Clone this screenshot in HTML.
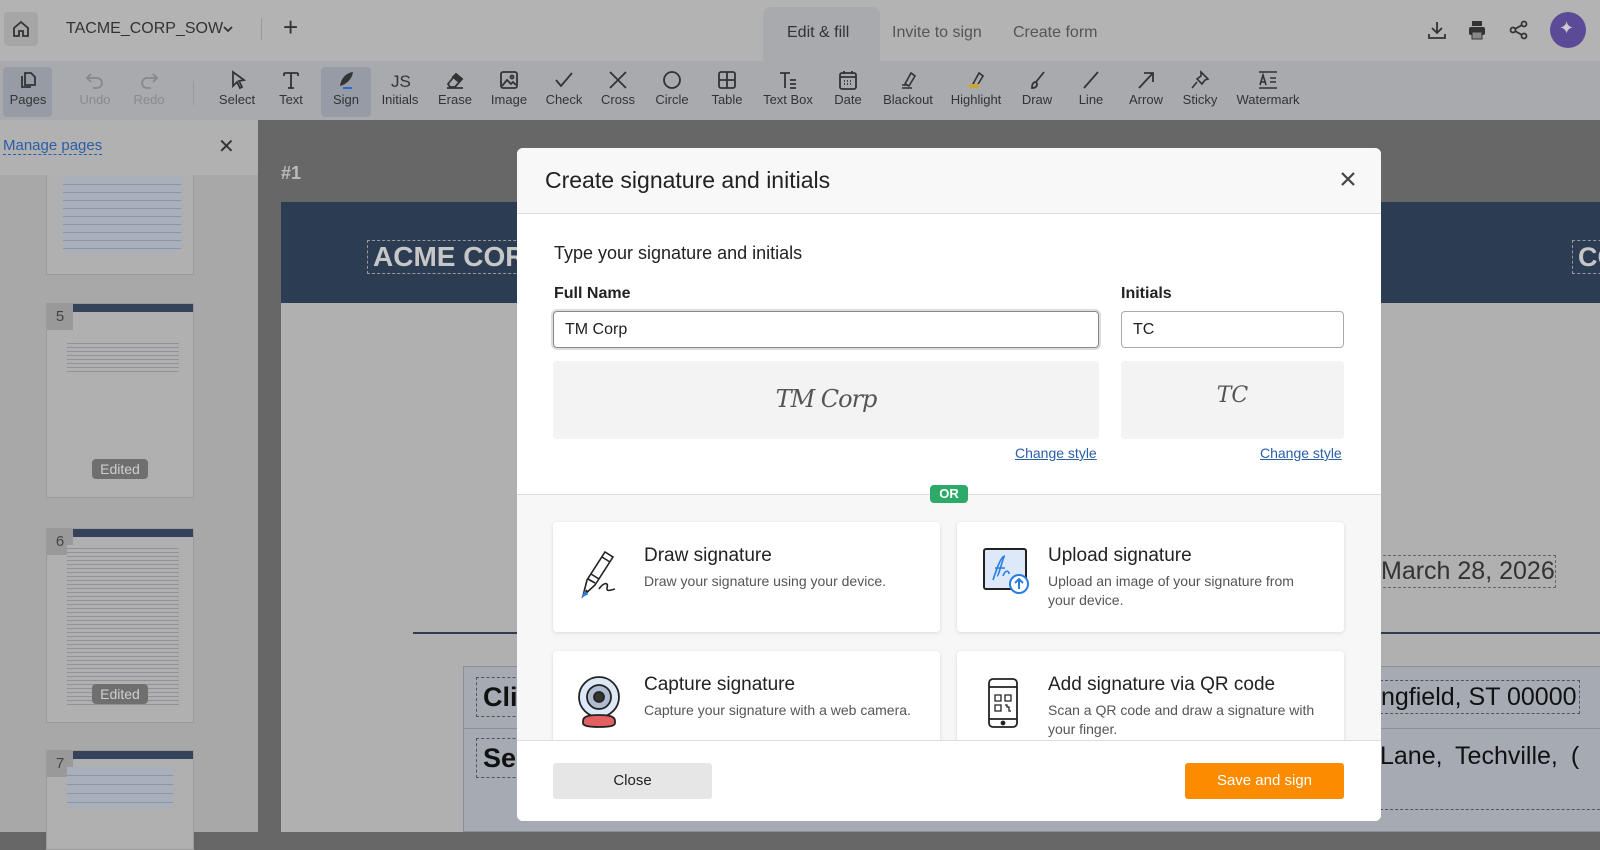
<!DOCTYPE html>
<html><head><meta charset="utf-8">
<style>
*{box-sizing:border-box;margin:0;padding:0}
body{width:1600px;height:832px;overflow:hidden;position:relative;font-family:"Liberation Sans",sans-serif;background:#676767}
.abs{position:absolute}
#top{left:0;top:0;width:1600px;height:61px;background:#b3b3b3}
#tb{left:0;top:61px;width:1600px;height:59px;background:#a9aaae}
.ti{position:absolute;top:64px;height:52px;text-align:center;font-size:13px;color:#333;width:56px;margin-left:-28px}
.ti svg{display:block;margin:6px auto 2px;width:22px;height:20px}
.ti.dis{color:#8a8a8a}
#left{left:0;top:120px;width:258px;height:712px;background:#a8a8a8}
.thumb{position:absolute;left:46px;width:148px;background:#b0b0b0;border:1px solid #9a9a9a}
.num{position:absolute;left:0;top:0;width:26px;height:26px;background:#999;color:#444;font-size:15px;text-align:center;line-height:26px}
.edited{position:absolute;left:45px;width:56px;height:20px;background:#6f6f6f;color:#cfcfcf;border-radius:4px;font-size:14px;text-align:center;line-height:20px}
.lines{position:absolute;left:20px;right:14px;background:repeating-linear-gradient(#b0b0b0 0 3px,#8f9298 3px 4px)}
#modal{left:517px;top:148px;width:864px;height:673px;background:#fff;border-radius:6px;overflow:hidden}
.card{position:absolute;width:387px;height:110px;background:#fff;border-radius:4px;box-shadow:0 1px 4px rgba(0,0,0,.12)}
.card h3{position:absolute;left:91px;top:23px;font-size:19px;font-weight:normal;color:#222}
.card p{position:absolute;left:91px;top:50px;font-size:14px;color:#555;line-height:19px;width:275px}
.card svg{position:absolute;left:24px;top:24px}
.nw{white-space:nowrap}
</style></head><body>
<div id="top" class="abs">
  <div class="abs" style="left:4px;top:12px;width:34px;height:34px;background:#a6a6a6;border-radius:4px"></div>
  <svg class="abs" style="left:11px;top:19px" width="20" height="20" viewBox="0 0 20 20" fill="none" stroke="#333" stroke-width="1.8"><path d="M3 9L10 3l7 6v8H12v-5H8v5H3z"/></svg>
  <div class="abs" style="left:66px;top:20px;font-size:16px;color:#333">TACME_CORP_SOW</div>
  <svg class="abs" style="left:222px;top:25px" width="12" height="8" viewBox="0 0 12 8"><path d="M2 2l4 4 4-4" stroke="#333" stroke-width="1.8" fill="none"/></svg>
  <div class="abs" style="left:261px;top:18px;width:1px;height:22px;background:#999"></div>
  <div class="abs" style="left:283px;top:12px;font-size:26px;color:#333;font-weight:300">+</div>
  <div class="abs" style="left:763px;top:7px;width:117px;height:54px;background:#a9aaae;border-radius:8px 8px 0 0"></div>
  <div class="abs" style="left:787px;top:24px;font-size:16px;color:#333">Edit &amp; fill</div>
  <div class="abs" style="left:892px;top:24px;font-size:16px;color:#555">Invite to sign</div>
  <div class="abs" style="left:1013px;top:24px;font-size:16px;color:#555">Create form</div>
  <svg class="abs" style="left:1426px;top:19px" width="22" height="22" viewBox="0 0 22 22" fill="none" stroke="#333" stroke-width="1.8"><path d="M11 3v11M6 9l5 5 5-5M3 15v4h16v-4"/></svg>
  <svg class="abs" style="left:1466px;top:19px" width="22" height="22" viewBox="0 0 22 22" fill="#333"><rect x="6" y="2" width="10" height="5"/><rect x="3" y="8" width="16" height="8" rx="2"/><rect x="6" y="13" width="10" height="7" fill="#888" stroke="#333"/></svg>
  <svg class="abs" style="left:1508px;top:19px" width="22" height="22" viewBox="0 0 22 22" fill="none" stroke="#333" stroke-width="1.8"><circle cx="16" cy="5" r="2.5"/><circle cx="5" cy="11" r="2.5"/><circle cx="16" cy="17" r="2.5"/><path d="M7 10l7-4M7 12l7 4"/></svg>
  <div class="abs" style="left:1550px;top:12px;width:36px;height:36px;border-radius:50%;background:#5a4a98"></div>
  <div class="abs" style="left:1559px;top:18px;color:#ccc;font-size:18px">✦</div>
</div>
<div id="tb" class="abs">
  <div class="abs" style="left:3px;top:6px;width:49px;height:50px;background:#979ba5;border-radius:4px"></div>
  <div class="abs" style="left:321px;top:6px;width:50px;height:50px;background:#979ba5;border-radius:4px"></div>
  <div class="abs" style="left:193px;top:20px;width:1px;height:24px;background:#999"></div>
</div>
<div class="ti" style="left:28px"><svg viewBox="0 0 22 20" fill="none" stroke="#333" stroke-width="1.8"><path d="M8 3h6l4 4v8H8z M5 6v11h9"/></svg>Pages</div>
<div class="ti dis" style="left:95px"><svg viewBox="0 0 22 20" fill="none" stroke="#888" stroke-width="1.8"><path d="M7 4L3 8l4 4M3 8h10a5 5 0 010 10H9"/></svg>Undo</div>
<div class="ti dis" style="left:149px"><svg viewBox="0 0 22 20" fill="none" stroke="#888" stroke-width="1.8"><path d="M15 4l4 4-4 4M19 8H9a5 5 0 000 10h4"/></svg>Redo</div>
<div class="ti" style="left:237px"><svg viewBox="0 0 22 20" fill="none" stroke="#333" stroke-width="1.8"><path d="M7 2l11 8-5 1 3 6-2 1-3-6-4 4z"/></svg>Select</div>
<div class="ti" style="left:291px"><svg viewBox="0 0 22 20" fill="none" stroke="#333" stroke-width="1.8"><path d="M4 3h14M11 3v15M8 18h6M4 3v3M18 3v3"/></svg>Text</div>
<div class="ti" style="left:346px"><svg viewBox="0 0 22 20" fill="#333"><path d="M5 16C6 8 11 3 18 2c-1 7-6 12-13 14z"/><rect x="8" y="17" width="9" height="2" fill="#2a6bd0"/></svg>Sign</div>
<div class="ti" style="left:400px"><svg viewBox="0 0 22 20"><text x="2" y="17" font-family="Liberation Sans" font-size="17" fill="#333">JS</text></svg>Initials</div>
<div class="ti" style="left:455px"><svg viewBox="0 0 22 20" fill="none" stroke="#333" stroke-width="1.8"><path d="M4 14l8-10 6 5-7 8H6z M3 18h16"/><path d="M12 4l6 5-3 3-6-5z" fill="#333"/></svg>Erase</div>
<div class="ti" style="left:509px"><svg viewBox="0 0 22 20" fill="none" stroke="#333" stroke-width="1.8"><rect x="3" y="2" width="16" height="16" rx="2"/><path d="M4 16l5-6 4 4 2-2 3 3"/><circle cx="14" cy="7" r="1.5"/></svg>Image</div>
<div class="ti" style="left:564px"><svg viewBox="0 0 22 20" fill="none" stroke="#333" stroke-width="1.8"><path d="M3 10l5 6L19 3"/></svg>Check</div>
<div class="ti" style="left:618px"><svg viewBox="0 0 22 20" fill="none" stroke="#333" stroke-width="1.8"><path d="M3 2l16 16M19 2L3 18"/></svg>Cross</div>
<div class="ti" style="left:672px"><svg viewBox="0 0 22 20" fill="none" stroke="#333" stroke-width="1.8"><circle cx="11" cy="10" r="8"/></svg>Circle</div>
<div class="ti" style="left:727px"><svg viewBox="0 0 22 20" fill="none" stroke="#333" stroke-width="1.8"><rect x="3" y="2" width="16" height="16" rx="2"/><path d="M11 2v16M3 10h16"/></svg>Table</div>
<div class="ti" style="left:788px;width:64px;margin-left:-32px"><svg viewBox="0 0 22 20" fill="none" stroke="#333" stroke-width="1.8"><path d="M3 3h10M8 3v15M13 10h6M13 14h6M13 18h6"/></svg>Text Box</div>
<div class="ti" style="left:848px"><svg viewBox="0 0 22 20" fill="none" stroke="#333" stroke-width="1.8"><rect x="3" y="3" width="16" height="16" rx="2"/><path d="M3 7h16M7 1v3M15 1v3M7 11h1M10 11h1M13 11h1M7 14h1M10 14h1M13 14h1"/></svg>Date</div>
<div class="ti" style="left:908px;width:64px;margin-left:-32px"><svg viewBox="0 0 22 20" fill="none" stroke="#333" stroke-width="1.6"><path d="M8 14l6-11 4 3-6 10zM5 18h10M5 15h6"/></svg>Blackout</div>
<div class="ti" style="left:976px;width:64px;margin-left:-32px"><svg viewBox="0 0 22 20" fill="none" stroke="#333" stroke-width="1.6"><path d="M8 14l6-11 4 3-6 10z"/><rect x="4" y="14" width="10" height="4" fill="#c9a63a" stroke="none"/></svg>Highlight</div>
<div class="ti" style="left:1037px"><svg viewBox="0 0 22 20" fill="none" stroke="#333" stroke-width="1.8"><path d="M18 2l-8 10M10 12c-3 0-4 2-4 6 3 0 5-1 5-4z"/></svg>Draw</div>
<div class="ti" style="left:1091px"><svg viewBox="0 0 22 20" fill="none" stroke="#333" stroke-width="1.8"><path d="M4 18L18 2"/></svg>Line</div>
<div class="ti" style="left:1146px"><svg viewBox="0 0 22 20" fill="none" stroke="#333" stroke-width="1.8"><path d="M4 18L18 3M9 3h9v9"/></svg>Arrow</div>
<div class="ti" style="left:1200px"><svg viewBox="0 0 22 20" fill="none" stroke="#333" stroke-width="1.6"><path d="M12 2l7 7-3 1-3 4-5-5 4-3zM8 12l-5 6"/></svg>Sticky</div>
<div class="ti" style="left:1268px;width:80px;margin-left:-40px"><svg viewBox="0 0 22 20" fill="none" stroke="#333" stroke-width="1.6"><path d="M2 2h18M2 18h18M13 8h6M13 12h6M3 15l3-10 3 10M4 12h4"/></svg>Watermark</div>

<div id="left" class="abs">
  <div class="abs" style="left:0;top:0;width:258px;height:55px;background:#b1b1b1"></div>
  <div class="abs" style="left:3px;top:17px;font-size:15px;color:#2a5da8;border-bottom:1px dashed #2a5da8">Manage pages</div>
  <div class="abs" style="left:218px;top:14px;font-size:20px;color:#333">✕</div>
  <div class="thumb" style="top:55px;height:100px;border-top:none"><div class="lines" style="top:2px;height:75px;left:16px;right:12px;background:repeating-linear-gradient(#a9b0bd 0 7px,#8f96a3 7px 8px)"></div></div>
  <div class="thumb" style="top:183px;height:195px"><div style="height:8px;background:#34435a;margin-left:26px"></div><div class="num">5</div><div class="lines" style="top:36px;height:34px"></div><div class="edited" style="top:155px">Edited</div></div>
  <div class="thumb" style="top:408px;height:195px"><div style="height:8px;background:#34435a;margin-left:26px"></div><div class="num">6</div><div class="lines" style="top:16px;height:160px"></div><div class="edited" style="top:155px">Edited</div></div>
  <div class="thumb" style="top:630px;height:100px"><div style="height:8px;background:#34435a;margin-left:26px"></div><div class="num">7</div><div class="lines" style="top:16px;height:40px;left:20px;right:20px;background:repeating-linear-gradient(#a9b0bd 0 8px,#8f96a3 8px 9px)"></div></div>
</div>

<div class="abs" style="left:281px;top:163px;font-size:18px;color:#bbb;font-weight:bold">#1</div>
<div class="abs" style="left:281px;top:202px;width:1319px;height:630px;background:#b0b0b0"></div>
<div class="abs" style="left:281px;top:202px;width:1319px;height:101px;background:#2b3c53"></div>
<div class="abs nw" style="left:367px;top:240px;width:240px;height:34px;border:1px dashed #999;color:#c7c7c7;font-size:28px;font-weight:bold;padding-left:5px;line-height:32px;overflow:hidden">ACME CORP</div>
<div class="abs nw" style="left:1572px;top:240px;width:40px;height:34px;border:1px dashed #999;color:#c7c7c7;font-size:27px;font-weight:bold;padding-left:5px;line-height:32px">CO</div>
<div class="abs nw" style="left:1378px;top:555px;width:178px;height:33px;border:1px dashed #666;color:#333;font-size:25px;padding-left:2px;line-height:31px">March 28, 2026</div>
<div class="abs" style="left:413px;top:632px;width:1190px;height:2px;background:#2b3c53"></div>
<div class="abs" style="left:463px;top:666px;width:1140px;height:166px;background:#a5aab3;border:1px solid #8a8f98"></div>
<div class="abs" style="left:463px;top:728px;width:1140px;height:1px;background:#8a8f98"></div>
<div class="abs nw" style="left:476px;top:677px;width:50px;height:40px;border:1px dashed #555;font-size:27px;font-weight:bold;color:#111;line-height:38px;padding-left:6px;overflow:hidden">Cli</div>
<div class="abs nw" style="left:476px;top:738px;width:50px;height:40px;border:1px dashed #555;font-size:27px;font-weight:bold;color:#111;line-height:38px;padding-left:6px;overflow:hidden">Ser</div>
<div class="abs nw" style="left:1380px;top:680px;width:200px;height:34px;border:1px dashed #555;font-size:25px;color:#111;line-height:32px">ngfield, ST 00000</div>
<div class="abs nw" style="left:1380px;top:740px;width:230px;height:70px;border-bottom:1px dashed #555;font-size:25px;color:#111;line-height:32px;word-spacing:6px">Lane, Techville, (</div>

<div id="modal" class="abs">
  <div class="abs" style="left:0;top:0;width:864px;height:66px;background:#f8f8f8;border-bottom:1px solid #ddd"></div>
  <div class="abs" style="left:28px;top:19px;font-size:23px;color:#222">Create signature and initials</div>
  <svg class="abs" style="left:823px;top:23px" width="16" height="16" viewBox="0 0 16 16"><path d="M2 2l12 12M14 2L2 14" stroke="#444" stroke-width="2.2"/></svg>
  <div class="abs" style="left:37px;top:95px;font-size:18px;color:#222">Type your signature and initials</div>
  <div class="abs" style="left:37px;top:137px;font-size:16px;font-weight:bold;color:#222">Full Name</div>
  <div class="abs" style="left:604px;top:137px;font-size:16px;font-weight:bold;color:#222">Initials</div>
  <div class="abs" style="left:36px;top:163px;width:546px;height:37px;border:1px solid #888;border-radius:4px;box-shadow:0 0 0 2px #ddd;font-size:16px;color:#222;padding:9px 11px">TM Corp</div>
  <div class="abs" style="left:604px;top:163px;width:223px;height:37px;border:1px solid #aaa;border-radius:4px;font-size:16px;color:#222;padding:9px 11px">TC</div>
  <div class="abs" style="left:36px;top:213px;width:546px;height:78px;background:#f3f3f3;border-radius:4px;text-align:center;font-family:'DejaVu Serif',serif;font-style:italic;font-size:24px;color:#555;line-height:76px;letter-spacing:-1px;font-weight:100">TM Corp</div>
  <div class="abs" style="left:604px;top:213px;width:223px;height:78px;background:#f3f3f3;border-radius:4px;text-align:center;font-family:'DejaVu Serif',serif;font-style:italic;font-size:22px;color:#555;line-height:70px">TC</div>
  <div class="abs" style="left:498px;top:297px;font-size:14px;color:#2a5da8;text-decoration:underline">Change style</div>
  <div class="abs" style="left:743px;top:297px;font-size:14px;color:#2a5da8;text-decoration:underline">Change style</div>
  <div class="abs" style="left:0;top:346px;width:864px;height:246px;background:#f7f7f7;border-top:1px solid #ddd"></div>
  <div class="abs" style="left:413px;top:337px;width:38px;height:18px;background:#2eaa68;border-radius:4px;color:#fff;font-size:13px;font-weight:bold;text-align:center;line-height:18px">OR</div>
  <div class="card" style="left:36px;top:374px"><svg width="46" height="56" viewBox="0 0 46 56" fill="none" stroke="#222" stroke-width="1.6"><path d="M6 50L10 34 28 6l8 5-18 28z"/><path d="M25 11l8 5M14 28l8 5M11 33l7 4M6 50l4-6"/><path d="M22 43c4-6 10-8 8-1-1 4 4 2 8 1" /><path d="M6 50l2-4 2 2z" fill="#2a7de0" stroke="#2a7de0"/></svg><h3>Draw signature</h3><p>Draw your signature using your device.</p></div>
  <div class="card" style="left:440px;top:374px"><svg width="50" height="50" viewBox="0 0 50 50" fill="none"><rect x="3" y="3" width="42" height="40" rx="2" fill="#dde9f8" stroke="#222" stroke-width="2"/><path d="M12 34c4-12 8-24 12-24-2 0-6 20-8 20M14 22h10M22 30c2-6 6-6 6-2" stroke="#2a7de0" stroke-width="1.6"/><circle cx="38" cy="38" r="9" fill="#fff" stroke="#2a7de0" stroke-width="2"/><path d="M38 43v-10M34 37l4-4 4 4" stroke="#2a7de0" stroke-width="2"/></svg><h3>Upload signature</h3><p>Upload an image of your signature from your device.</p></div>
  <div class="card" style="left:36px;top:503px"><svg width="46" height="56" viewBox="0 0 46 56" fill="none" stroke="#222" stroke-width="1.8"><circle cx="22" cy="22" r="20" fill="#dde9f8"/><circle cx="22" cy="22" r="12" fill="#aebbd0"/><circle cx="22" cy="22" r="5" fill="#333"/><path d="M6 46c0-4 4-6 16-6s16 2 16 6v2c0 3-6 4-16 4S6 51 6 48z" fill="#e16161"/></svg><h3>Capture signature</h3><p>Capture your signature with a web camera.</p></div>
  <div class="card" style="left:440px;top:503px"><svg width="40" height="56" viewBox="0 0 40 56" fill="none" stroke="#222" stroke-width="1.8"><rect x="8" y="4" width="28" height="48" rx="4"/><path d="M8 12h28M8 44h28"/><circle cx="22" cy="48" r="1.5" fill="#222"/><path d="M14 20h6v6h-6zM24 20h6v6h-6zM14 30h6v6h-6zM24 30h2v2h2v4h2" stroke-width="1.3"/></svg><h3>Add signature via QR code</h3><p>Scan a QR code and draw a signature with your finger.</p></div>
  <div class="abs" style="left:0;top:592px;width:864px;height:81px;background:#fff;border-top:1px solid #ddd"></div>
  <div class="abs" style="left:36px;top:615px;width:159px;height:36px;background:#e6e6e6;border-radius:3px;text-align:center;line-height:36px;font-size:15px;color:#222">Close</div>
  <div class="abs" style="left:668px;top:615px;width:159px;height:36px;background:#fb8c00;border-radius:3px;text-align:center;line-height:36px;font-size:15px;color:#fff">Save and sign</div>
</div>
</body></html>
